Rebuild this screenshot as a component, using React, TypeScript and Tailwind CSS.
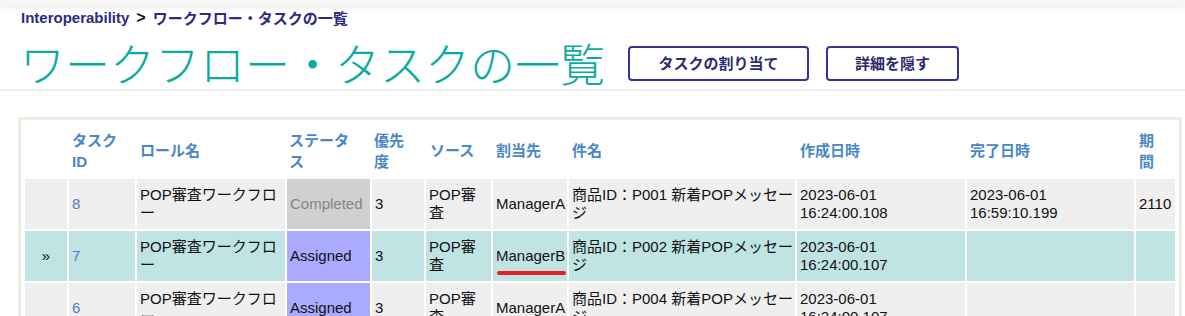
import React from 'react';

type Row = {
  mark: string;
  id: number;
  status: 'Completed' | 'Assigned';
  assignee: string;
  subject: string;
  created: string;
  done: string;
  period: string;
  current?: boolean;
};

const rows: Row[] = [
  {
    mark: '',
    id: 8,
    status: 'Completed',
    assignee: 'ManagerA',
    subject: 'P001',
    created: '16:24:00.108',
    done: '16:59:10.199',
    period: '2110',
  },
  {
    mark: '»',
    id: 7,
    status: 'Assigned',
    assignee: 'ManagerB',
    subject: 'P002',
    created: '16:24:00.107',
    done: '',
    period: '',
    current: true,
  },
  {
    mark: '',
    id: 6,
    status: 'Assigned',
    assignee: 'ManagerA',
    subject: 'P004',
    created: '16:24:00.107',
    done: '',
    period: '',
  },
];

export default function App() {
  return (
    <div className="min-h-[316px] bg-white font-['Liberation_Sans','Noto_Sans_CJK_JP',sans-serif] text-[#111]">
      {/* top bar shadow */}
      <div className="h-[5px] bg-[#f7f7f7] shadow-[0_2px_7px_rgba(0,0,0,0.10)]" />

      {/* Breadcrumb */}
      <div className="mt-[2px] flex h-[22px] items-center pl-[21px] text-[15px] font-bold leading-[22px] text-[#2e2a80]">
        <span>Interoperability</span>
        <span className="mx-[7px] text-[16px] text-[#111]">&gt;</span>
        <span className="font-['Noto_Sans_CJK_JP',sans-serif] text-[15px]">ワークフロー・タスクの一覧</span>
      </div>

      {/* Title + actions */}
      <div className="mt-[8px] flex h-[52px] items-center pl-[20px]">
        <h1 className="font-['Noto_Sans_CJK_JP',sans-serif] text-[45px] font-light leading-[52px] text-[#0cab9f]">
          ワークフロー・タスクの一覧
        </h1>
        <button className="ml-[23px] flex h-[35px] w-[181px] items-center justify-center rounded-[4px] border-2 border-[#333399] font-['Noto_Sans_CJK_JP',sans-serif] text-[15px] font-bold text-[#2d2b6b]">
          タスクの割り当て
        </button>
        <button className="ml-[17px] flex h-[35px] w-[133px] items-center justify-center rounded-[4px] border-2 border-[#333399] font-['Noto_Sans_CJK_JP',sans-serif] text-[15px] font-bold text-[#2d2b6b]">
          詳細を隠す
        </button>
      </div>
      <div className="h-[2px] bg-[#eeeeee]" />

      {/* Task table */}
      <div className="ml-[18px] mt-[26px] w-[1164px] border-[3px] border-[#ecece2] p-[2px]">
        <table className="w-[1154px] table-fixed border-separate border-spacing-[2px] text-[15px] leading-[18px]">
          <thead>
            <tr className="h-[53px] text-left align-middle font-bold text-[#4a87c5] leading-[21px]">
              <th className="w-[42px]" />
              <th className="w-[66px] px-[3px]">
                タスク
                <br />
                ID
              </th>
              <th className="w-[148px] px-[3px]">ロール名</th>
              <th className="w-[83px] px-[2px]">
                ステータ
                <br />ス
              </th>
              <th className="w-[52px] px-[2px]">
                優先
                <br />度
              </th>
              <th className="w-[65px] px-[4px]">ソース</th>
              <th className="w-[74px] px-[3px]">割当先</th>
              <th className="w-[226px] px-[3px]">件名</th>
              <th className="w-[168px] px-[3px]">作成日時</th>
              <th className="w-[167px] px-[3px]">完了日時</th>
              <th className="w-[39px] px-[3px]">
                期
                <br />間
              </th>
            </tr>
          </thead>
          <tbody>
            {rows.map((r) => {
              const bg = r.current ? 'bg-[#c0e4e4]' : 'bg-[#efefef]';
              return (
                <tr key={r.id} className="h-[50px] align-middle">
                  <td className={`${bg} text-center`}>{r.mark}</td>
                  <td className={`${bg} px-[3px] text-[#4a7fc0]`}>{r.id}</td>
                  <td className={`${bg} whitespace-nowrap px-[3px]`}>
                    POP審査ワークフロ
                    <br />ー
                  </td>
                  <td
                    className={
                      r.status === 'Completed'
                        ? 'bg-[#d0d0d0] px-[3px] text-[#858585]'
                        : 'bg-[#aaaaff] px-[3px] text-[#111]'
                    }
                  >
                    {r.status}
                  </td>
                  <td className={`${bg} px-[3px]`}>3</td>
                  <td className={`${bg} whitespace-nowrap px-[3px]`}>
                    POP審
                    <br />査
                  </td>
                  <td className={`${bg} relative whitespace-nowrap px-[3px]`}>
                    {r.assignee}
                    {r.current && (
                      <span className="absolute bottom-[6px] left-[4px] h-[4px] w-[69px] rounded-full bg-[#e3201f]" />
                    )}
                  </td>
                  <td className={`${bg} whitespace-nowrap px-[3px]`}>
                    商品ID：{r.subject} 新着POPメッセー
                    <br />ジ
                  </td>
                  <td className={`${bg} px-[3px]`}>
                    2023-06-01
                    <br />
                    {r.created}
                  </td>
                  <td className={`${bg} px-[3px]`}>
                    {r.done && (
                      <>
                        2023-06-01
                        <br />
                        {r.done}
                      </>
                    )}
                  </td>
                  <td className={`${bg} px-[3px]`}>{r.period}</td>
                </tr>
              );
            })}
          </tbody>
        </table>
      </div>
    </div>
  );
}
